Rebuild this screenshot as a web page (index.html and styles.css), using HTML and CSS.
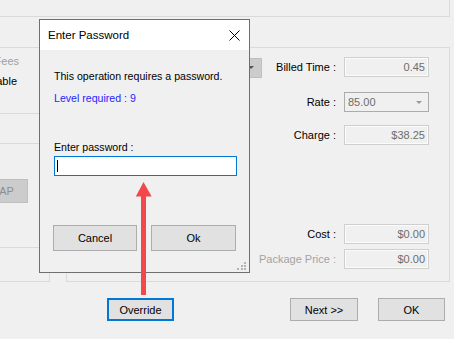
FILE: index.html
```html
<!DOCTYPE html>
<html>
<head>
<meta charset="utf-8">
<link rel="stylesheet" href="styles.css">
</head>
<body>
<div class="form">
  <div class="toppanel"></div>
  <div class="groups">
    <div class="leftbox">
      <div class="lb-sec1">
        <div class="lb-line lb-fees"><span>Late Fees</span></div>
        <div class="lb-line lb-able"><span>Billable</span></div>
      </div>
      <div class="lb-sec2"></div>
      <div class="lb-sec3"><div class="ap-btn">MAP</div></div>
      <div class="lb-sec4"></div>
    </div>
    <div class="rightbox">
      <div class="row row1">
        <div class="mini"><span class="mini-tri"></span></div>
        <div class="label">Billed Time :</div>
        <div class="field ro">0.45</div>
      </div>
      <div class="row row2">
        <div class="label">Rate :</div>
        <div class="field combo"><span class="combo-val">85.00</span><span class="combo-tri"></span></div>
      </div>
      <div class="row row3">
        <div class="label">Charge :</div>
        <div class="field ro">$38.25</div>
      </div>
      <div class="row row4">
        <div class="label">Cost :</div>
        <div class="field ro">$0.00</div>
      </div>
      <div class="row row5">
        <div class="label muted">Package Price :</div>
        <div class="field ro">$0.00</div>
      </div>
    </div>
  </div>
  <div class="buttons">
    <div class="btn btn-override">Override</div>
    <div class="btn btn-next">Next &gt;&gt;</div>
    <div class="btn btn-ok">OK</div>
  </div>
</div>

<div class="dialog">
  <div class="titlebar">
    <span class="title">Enter Password</span>
    <svg class="close" width="11" height="11" viewBox="0 0 11 11"><path d="M0.5 0.5 L10.5 10.5 M10.5 0.5 L0.5 10.5" stroke="#000" stroke-width="1" fill="none"/></svg>
  </div>
  <div class="dlg-body">
    <div class="msg">This operation requires a password.</div>
    <div class="level">Level required : 9</div>
    <div class="pwlabel">Enter password :</div>
    <div class="pwinput"><span class="caret"></span></div>
    <div class="dlg-buttons">
      <div class="btn dbtn-cancel">Cancel</div>
      <div class="btn dbtn-ok">Ok</div>
    </div>
  </div>
  <svg class="grip" width="10" height="9" viewBox="0 0 10 9">
    <rect x="7" y="0" width="2" height="2" fill="#b4b4b4"/>
    <rect x="4" y="3" width="2" height="2" fill="#b4b4b4"/>
    <rect x="7" y="3" width="2" height="2" fill="#b4b4b4"/>
    <rect x="0" y="6" width="2" height="2" fill="#b4b4b4"/>
    <rect x="4" y="6" width="2" height="2" fill="#b4b4b4"/>
    <rect x="7" y="6" width="2" height="2" fill="#b4b4b4"/>
  </svg>
</div>

<svg class="arrow" width="454" height="339" viewBox="0 0 454 339">
  <polygon points="143.5,182 135.8,196.5 151.7,196.5" fill="#f4474b"/>
  <rect x="141" y="196" width="5" height="99" fill="#f4474b"/>
</svg>
</body>
</html>
```

FILE: styles.css
```css
* { box-sizing: border-box; }

html, body {
  margin: 0;
  padding: 0;
}

body {
  background: #f0f0f0;
  font-family: "Liberation Sans", Arial, sans-serif;
  font-size: 11px;
  color: #000;
  width: 454px;
  height: 339px;
  overflow: hidden;
  position: relative;
}

.toppanel {
  width: 450px;
  height: 17px;
  border-right: 1px solid #dadada;
  border-bottom: 1px solid #dadada;
}

.groups {
  display: flex;
  margin-top: 30px;
}

.leftbox {
  width: 50px;
  height: 235px;
  border: 1px solid #dadada;
  border-left: none;
  overflow: hidden;
  display: flex;
  flex-direction: column;
}

.lb-sec1 {
  height: 65px;
  padding-top: 7px;
  line-height: 13px;
}

.lb-line {
  display: flex;
  justify-content: flex-end;
  white-space: nowrap;
}

.lb-line span { flex: none; }

.lb-fees {
  color: #a0a0a0;
  padding-right: 30px;
}

.lb-able {
  margin-top: 7px;
  padding-right: 32px;
}

.lb-sec2 {
  border-top: 1px solid #dadada;
  height: 30px;
}

.lb-sec3 {
  border-top: 1px solid #dadada;
  height: 104px;
  padding-top: 35px;
}

.ap-btn {
  margin-left: -24px;
  width: 52px;
  height: 24px;
  background: #cccccc;
  border: 1px solid #bfbfbf;
  color: #8e8e8e;
  display: flex;
  align-items: center;
  justify-content: center;
}

.lb-sec4 {
  border-top: 1px solid #dadada;
  flex: 1;
}

.rightbox {
  margin-left: 16px;
  width: 384px;
  height: 235px;
  border: 1px solid #dadada;
}

.row {
  display: flex;
  align-items: center;
  height: 20px;
}

.row1 { margin-top: 9px; }
.row2 { margin-top: 15px; }
.row3 { margin-top: 13px; }
.row4 { margin-top: 79px; }
.row5 { margin-top: 5px; }

.mini {
  width: 22px;
  height: 20px;
  margin-left: 173px;
  margin-top: 1px;
  background: #cccccc;
  border: 1px solid #bfbfbf;
  display: flex;
  align-items: center;
  justify-content: center;
}

.mini-tri {
  width: 0;
  height: 0;
  border-left: 3px solid transparent;
  border-right: 3px solid transparent;
  border-top: 3px solid #555;
}

.label {
  flex: 1;
  text-align: right;
  padding-right: 8px;
  white-space: nowrap;
}

.label.muted { color: #a3a3a3; }

.field {
  width: 85px;
  height: 20px;
  margin-right: 20px;
}

.ro {
  background: #f0f0f0;
  border: 1px solid #cfcfcf;
  box-shadow: inset 0 0 0 1px #fbfbfb;
  color: #6d6d6d;
  text-align: right;
  padding-right: 3px;
  line-height: 18px;
}

.combo {
  background: #f0f0f0;
  border: 1px solid #acacac;
  color: #6d6d6d;
  display: flex;
  align-items: center;
  padding-left: 3px;
  padding-right: 6px;
}

.combo-val { flex: 1; }

.combo-tri {
  width: 0;
  height: 0;
  border-left: 3px solid transparent;
  border-right: 3px solid transparent;
  border-top: 3px solid #9a9a9a;
}

.buttons {
  display: flex;
  margin-top: 16px;
}

.btn {
  height: 23px;
  background: #e1e1e1;
  border: 1px solid #adadad;
  display: flex;
  align-items: center;
  justify-content: center;
}

.btn-override {
  margin-left: 107px;
  width: 67px;
  border: 2px solid #0078d7;
}

.btn-next {
  margin-left: 116px;
  width: 68px;
}

.btn-ok {
  margin-left: 20px;
  width: 67px;
}

/* dialog */
.dialog {
  position: absolute;
  left: 39px;
  top: 19px;
  width: 211px;
  height: 254px;
  border: 1px solid #6f6f6f;
  background: #f0f0f0;
}

.titlebar {
  height: 30px;
  background: #fff;
  display: flex;
  align-items: center;
  padding-left: 8px;
  padding-right: 9px;
}

.title {
  flex: 1;
  font-size: 11.5px;
}

.close { display: block; }

.dlg-body {
  padding-left: 14px;
  line-height: 13px;
  font-size: 10.6px;
}

.msg { margin-top: 20px; }

.level {
  margin-top: 9px;
  color: #1f1fff;
}

.pwlabel { margin-top: 36px; }

.pwinput {
  margin-top: 2px;
  width: 183px;
  height: 20px;
  background: #fff;
  border: 1px solid #0078d7;
  display: flex;
  align-items: center;
}

.caret {
  width: 1px;
  height: 12px;
  background: #000;
  margin-left: 2px;
}

.dlg-buttons {
  display: flex;
  margin-top: 49px;
  margin-left: -1px;
  font-size: 11px;
}

.dbtn-cancel {
  width: 84px;
  height: 26px;
}

.dbtn-ok {
  width: 85px;
  height: 26px;
  margin-left: 14px;
}

.grip {
  position: absolute;
  right: 2px;
  bottom: 1px;
}

.arrow {
  position: absolute;
  left: 0;
  top: 0;
  pointer-events: none;
}
```
